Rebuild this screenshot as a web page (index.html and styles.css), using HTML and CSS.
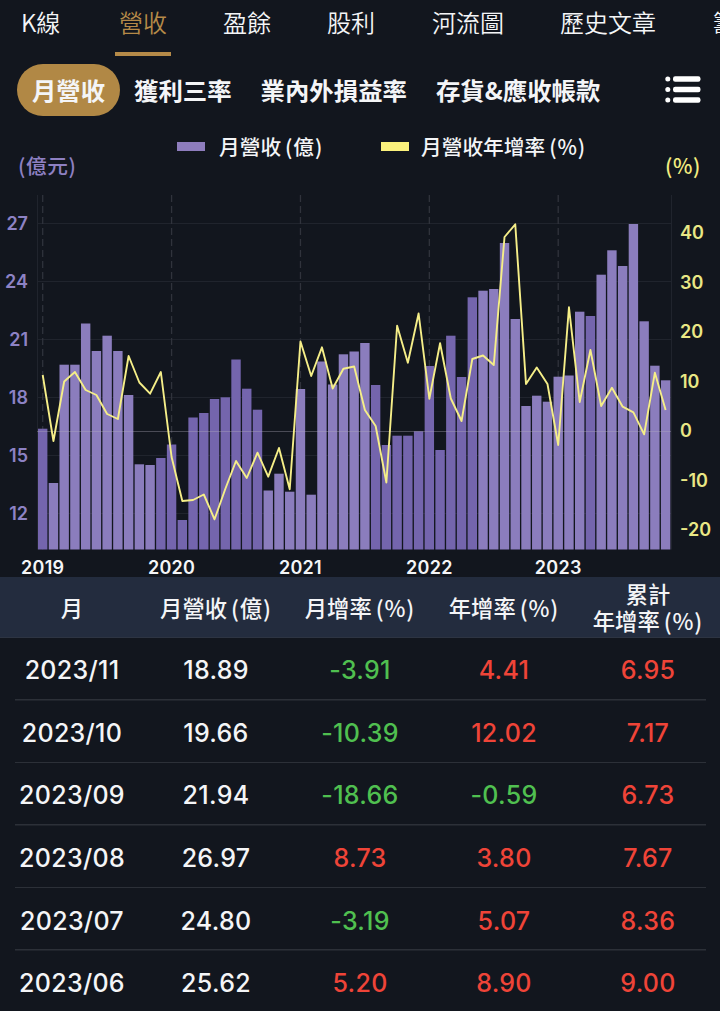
FILE: index.html
```html
<!DOCTYPE html>
<html lang="zh-Hant">
<head>
<meta charset="utf-8">
<title>月營收</title>
<link rel="stylesheet" href="styles.css">
</head>
<body>
<nav class="tabs">
  <span class="tab">K線</span><span class="tab tab-active">營收</span><span class="tab">盈餘</span><span class="tab">股利</span><span class="tab">河流圖</span><span class="tab">歷史文章</span><span class="tab">籌碼</span>
</nav>
<nav class="subtabs">
  <span class="pill">月營收</span>
  <span class="subtab">獲利三率</span>
  <span class="subtab">業內外損益率</span>
  <span class="subtab">存貨&amp;應收帳款</span>
  <svg class="list-icon" width="36" height="28" viewBox="0 0 36 28" fill="#fff">
    <circle cx="2.8" cy="3" r="2.5"/><rect x="8" y="0.3" width="27.5" height="5.4" rx="2.2"/>
    <circle cx="2.8" cy="13.5" r="2.5"/><rect x="8" y="10.8" width="27.5" height="5.4" rx="2.2"/>
    <circle cx="2.8" cy="24" r="2.5"/><rect x="8" y="21.3" width="27.5" height="5.4" rx="2.2"/>
  </svg>
</nav>
<section class="legend">
  <span class="unit unit-left">(億元)</span>
  <span class="key key-revenue"><i class="swatch"></i>月營收<b class="paren">(億)</b></span>
  <span class="key key-growth"><i class="swatch"></i>月營收年增率<b class="paren">(%)</b></span>
  <span class="unit unit-right">(%)</span>
</section>
<svg class="chart" id="chart" width="720" height="387" viewBox="0 190 720 387"></svg>
<header class="row head">
  <span>月</span><span>月營收<b class="paren">(億)</b></span><span>月增率<b class="paren">(%)</b></span><span>年增率<b class="paren">(%)</b></span><span>累計<br>年增率<b class="paren">(%)</b></span>
</header>
<main class="rows">
  <div class="row"><span>2023/11</span><span>18.89</span><span class="down">-3.91</span><span class="up">4.41</span><span class="up">6.95</span></div>
  <div class="row"><span>2023/10</span><span>19.66</span><span class="down">-10.39</span><span class="up">12.02</span><span class="up">7.17</span></div>
  <div class="row"><span>2023/09</span><span>21.94</span><span class="down">-18.66</span><span class="down">-0.59</span><span class="up">6.73</span></div>
  <div class="row"><span>2023/08</span><span>26.97</span><span class="up">8.73</span><span class="up">3.80</span><span class="up">7.67</span></div>
  <div class="row"><span>2023/07</span><span>24.80</span><span class="down">-3.19</span><span class="up">5.07</span><span class="up">8.36</span></div>
  <div class="row"><span>2023/06</span><span>25.62</span><span class="up">5.20</span><span class="up">8.90</span><span class="up">9.00</span></div>
</main>
<script src="chart.js"></script>
</body>
</html>
```

FILE: styles.css
```css
* { box-sizing: border-box; }
body {
  margin: 0;
  width: 720px;
  height: 1011px;
  overflow: hidden;
  background: #12161e;
  color: #f4f5f7;
  font-family: Inter, "Noto Sans CJK TC", sans-serif;
}
.tabs {
  display: grid;
  grid-template-columns: 94px 104px 104px 105px 128px 153px 60px;
  height: 56px;
  padding-left: 21px;
  overflow: hidden;
  font-family: "Noto Sans CJK TC", sans-serif;
  font-size: 24px;
  font-weight: 350;
  line-height: 44px;
  white-space: nowrap;
}
.tab { height: 56px; }
.tab:not(:first-child) { padding-left: 4px; }
.tab-active { width: 56px; color: #b58a48; border-bottom: 4px solid #b58a48; }
.subtabs {
  display: flex;
  align-items: center;
  height: 52px;
  margin-top: 8px;
  padding-left: 17px;
  font-family: "Noto Sans CJK TC", sans-serif;
  font-size: 24.4px;
  font-weight: 600;
  white-space: nowrap;
}
.pill {
  width: 103px;
  height: 52px;
  border-radius: 26px;
  background: #b18845;
  line-height: 52px;
  text-align: center;
}
.subtab { margin-left: 29px; line-height: 52px; }
.pill + .subtab { margin-left: 14px; }
.list-icon { margin-left: auto; margin-right: 19px; }
.legend {
  display: grid;
  grid-template-columns: 158px 204px 284px 36px;
  height: 74px;
  padding-left: 19px;
  font-family: "Noto Sans CJK TC", sans-serif;
  font-size: 20.7px;
  font-weight: 500;
  white-space: nowrap;
}
.key { display: flex; align-items: center; height: 60px; }
.swatch { width: 28px; height: 9px; margin-right: 14px; }
.key-growth .swatch { margin-right: 12px; }
.key-revenue .swatch { background: #8e7dbd; }
.key-growth .swatch { background: #fbf17c; }
.paren { margin-left: 4px; font-weight: 500; letter-spacing: .9px; }
.unit { padding-top: 34px; line-height: 30px; letter-spacing: .6px; }
.unit-left { margin-left: -1px; color: #8e80c2; }
.unit-right { color: #f3ed80; text-align: right; }
.chart {
  display: block;
  font-family: Inter, sans-serif;
  font-size: 18px;
  font-weight: 600;
}
.axis-left { fill: #8d82c4; text-anchor: end; }
.axis-right { fill: #e9e785; }
.axis-year { fill: #f4f5f7; text-anchor: middle; letter-spacing: .3px; }
.grid { stroke: #20242d; stroke-width: 1; }
.year-line { stroke: #30333c; stroke-width: 1.3; stroke-dasharray: 7 4; }
.zero { stroke: #b4b0c0; stroke-opacity: .35; stroke-width: 1; }
.bar { fill: #8b7dbd; }
.bar-dark { fill: #7465ad; }
.growth { fill: none; stroke: #f5ee88; stroke-width: 1.9; stroke-linejoin: round; }
.row {
  display: grid;
  grid-template-columns: repeat(5, 1fr);
  align-items: center;
  text-align: center;
}
.head {
  height: 61px;
  background: #232c3e;
  border-bottom: 1px solid #2d3442;
  font-family: "Noto Sans CJK TC", sans-serif;
  font-size: 22.3px;
  font-weight: 500;
  line-height: 27px;
  white-space: nowrap;
}
.rows .row {
  height: 62.6px;
  padding-top: 2px;
  font-size: 25px;
  font-weight: 550;
  letter-spacing: .3px;
  background: linear-gradient(#2c3038, #2c3038) center bottom / 691px 1.5px no-repeat;
}
.up { color: #ef4438; }
.down { color: #50c050; }
```

FILE: chart.js
```js
const chart = document.getElementById('chart');
const STEP = 10.74, FIRST = 42.7, BASE = 549.5;

// Top edge of each monthly revenue bar, January 2019 to November 2023.
const bars = [428.7,483,364.7,364.7,323.5,351,335.7,351,395,464.3,465,458,
  444.5,520,417.5,413,399,397.3,359.5,388.7,409.7,490.5,473.7,491.7,
  389,494.7,361.5,384.5,354.3,351.5,343,385,445,435.7,435.7,431.3,
  366,450,335.7,377,297.3,290.7,289,243,319,406,395.7,401.7,
  376.7,375.5,311.7,316,274.7,250.3,266,224,321.3,365.7,380.3];

// Height of the year-over-year line at each month.
const growth = [375,441,381.5,372,390,395,414,419,356,382.5,393.7,372,
  457,501,500,494.5,519.3,489,461,478,452.7,476.7,448,489.3,
  341.5,376,347.3,388.5,368.7,366.5,410,426,482.5,325.7,362.7,313.5,
  398.7,343.3,398.5,421,359,355.5,365,237,224.3,384,367.5,384,
  445,307.3,402,350,406,387.7,406.7,412.3,434.3,372.7,410];

const isDark = i => i === 0 || (i >= 11 && i <= 20) || (i >= 31 && i <= 40) || i === 51;
const line = (cls, x1, y1, x2, y2) =>
  `<line class="${cls}" x1="${x1}" y1="${y1}" x2="${x2}" y2="${y2}"/>`;
const text = (cls, x, y, s) => `<text class="${cls}" x="${x}" y="${y}">${s}</text>`;

let out = line('grid', 37.5, 195, 37.5, BASE) + line('grid', 671.5, 195, 671.5, BASE);
[27, 24, 21, 18, 15, 12].forEach((v, i) => {
  const y = 223.5 + i * 58;
  out += line('grid', 37, y, 671, y) + text('axis-left', 28, y + 6, v);
});
[40, 30, 20, 10, 0, -10, -20].forEach((v, i) => {
  out += text('axis-right', 680, 239 + i * 49.5, v);
});
for (let k = 0; k < 5; k++) {
  const x = FIRST + k * 12 * STEP;
  out += line('year-line', x, 195, x, BASE) + text('axis-year', x, 574, 2019 + k);
}
bars.forEach((y, i) => {
  const x = FIRST + i * STEP - 4.7;
  out += `<rect class="bar${isDark(i) ? ' bar-dark' : ''}" x="${x}" y="${y}" width="9.4" height="${BASE - y}"/>`;
});
out += line('zero', 37, 431.5, 671, 431.5);
out += `<polyline class="growth" points="${growth.map((y, i) => `${FIRST + i * STEP},${y}`).join(' ')}"/>`;
chart.innerHTML = out;
```
